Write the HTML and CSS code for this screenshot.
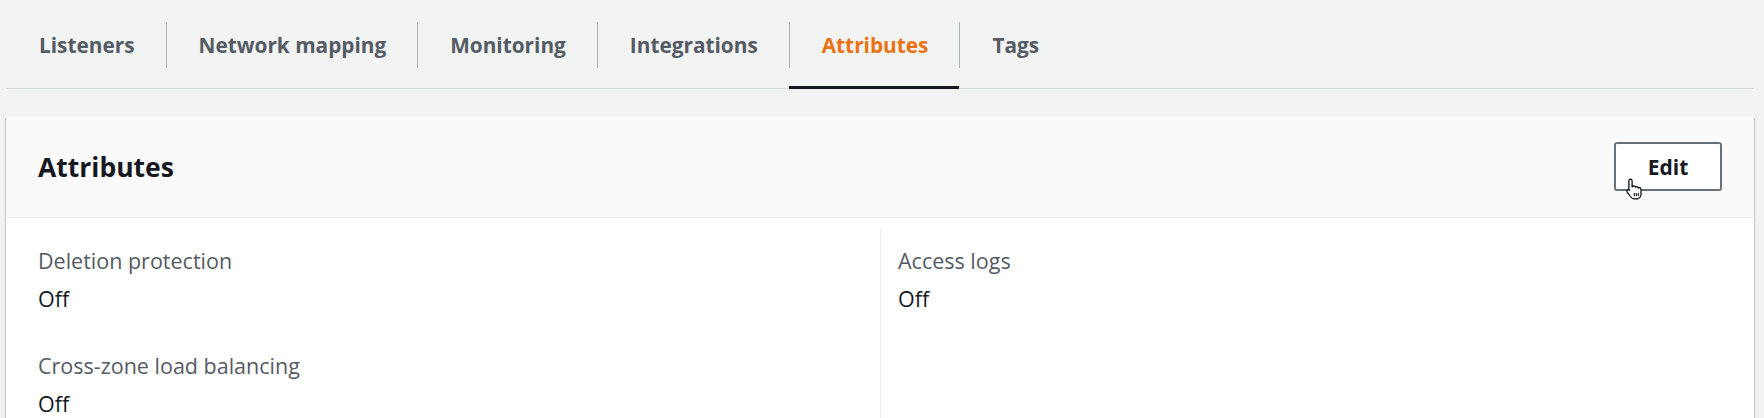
FILE: index.html
```html
<!DOCTYPE html>
<html lang="en">
<head>
<meta charset="utf-8">
<title>Attributes</title>
<link rel="stylesheet" href="styles.css">
</head>
<body>
<div class="page">
  <nav class="tabs">
    <a class="tab"><span class="tab-label">Listeners</span></a>
    <a class="tab"><span class="tab-label">Network mapping</span></a>
    <a class="tab"><span class="tab-label">Monitoring</span></a>
    <a class="tab"><span class="tab-label">Integrations</span></a>
    <a class="tab active"><span class="tab-label">Attributes</span></a>
    <a class="tab"><span class="tab-label">Tags</span></a>
  </nav>

  <section class="panel">
    <header class="panel-header">
      <h2 class="panel-title">Attributes</h2>
      <div class="btn-wrap">
        <button class="btn">Edit</button>
        <svg class="cursor" width="19" height="23" viewBox="0 0 19 23" aria-hidden="true">
          <path d="M5.5 1.2c.9 0 1.6.7 1.6 1.6v6.1h.2c.2-.6.8-1 1.5-1 .8 0 1.4.6 1.6 1.3.3-.4.8-.6 1.3-.6.9 0 1.6.7 1.6 1.5.3-.3.7-.4 1.1-.4.9 0 1.6.7 1.6 1.6v4.9c0 2.6-2 4.6-4.6 4.6H9.3c-1.4 0-2.7-.7-3.5-1.8l-3.6-4.8c-.5-.7-.4-1.7.3-2.2.7-.5 1.6-.4 2.1.3l-.7-.6V2.8c0-.9.7-1.6 1.6-1.6z" fill="#fff" stroke="#000" stroke-width="1.2" stroke-linejoin="round"/>
          <path d="M9.3 15v3.2M11.3 15v3.2M13.3 15v3.2" stroke="#000" stroke-width="1"/>
        </svg>
      </div>
    </header>
    <div class="panel-body">
      <div class="col">
        <div class="field">
          <div class="label">Deletion protection</div>
          <div class="value">Off</div>
        </div>
        <div class="field">
          <div class="label">Cross-zone load balancing</div>
          <div class="value">Off</div>
        </div>
      </div>
      <div class="col">
        <div class="field">
          <div class="label">Access logs</div>
          <div class="value">Off</div>
        </div>
      </div>
    </div>
  </section>
</div>
</body>
</html>
```

FILE: styles.css
```css
html, body {
  margin: 0;
  padding: 0;
  overflow: hidden;
  background: #f2f3f3;
  font-family: "Open Sans", "Liberation Sans", sans-serif;
}

.page {
  margin: 0 10px 0 6px;
}

.tabs {
  display: flex;
  border-bottom: 1px solid #d5dbdb;
}

.tab {
  display: flex;
  padding: 22px 0 18px;
  border-bottom: 3px solid transparent;
  margin-bottom: -1px;
  color: #545b64;
  font-weight: 700;
  font-size: 20.8px;
  cursor: pointer;
}

.tab-label {
  display: flex;
  align-items: center;
  height: 46px;
  padding: 0 31px 0 32px;
  border-left: 1px solid #aab7b8;
  line-height: 30px;
}

.tab:first-child .tab-label {
  border-left: none;
  padding-left: 33px;
}

.tab.active {
  color: #ec7211;
  border-bottom-color: #16191f;
}

.panel {
  margin-top: 28px;
  background: #fff;
  box-shadow: 0 1px 1px 0 rgba(0, 28, 36, 0.3), 1px 1px 1px 0 rgba(0, 28, 36, 0.15), -1px 1px 1px 0 rgba(0, 28, 36, 0.15);
}

.panel-header {
  display: flex;
  align-items: center;
  justify-content: space-between;
  padding: 25px 32px 26px;
  background: #fafafa;
  border-bottom: 1px solid #eaeded;
}

.panel-title {
  margin: 0;
  font-size: 26.5px;
  font-weight: 700;
  color: #16191f;
  line-height: 36px;
}

.btn-wrap {
  position: relative;
}

.btn {
  display: block;
  width: 108px;
  height: 49px;
  border: 2px solid #687078;
  border-radius: 3px;
  background: #fff;
  color: #16191f;
  font-family: inherit;
  font-size: 21px;
  font-weight: 700;
  padding: 0;
}

.cursor {
  position: absolute;
  left: 11px;
  top: 36px;
}

.panel-body {
  display: grid;
  grid-template-columns: 1fr 1fr;
  padding: 10px 32px 40px;
}

.col {
  padding-top: 18px;
}

.col + .col {
  border-left: 1px solid #eaeded;
  padding-left: 17px;
}

.field {
  display: flex;
  flex-direction: column;
  gap: 8px;
}

.field + .field {
  margin-top: 37px;
}

.label {
  font-size: 21.5px;
  line-height: 30px;
  color: #545b64;
}

.value {
  font-size: 21.5px;
  line-height: 30px;
  color: #16191f;
}
```
